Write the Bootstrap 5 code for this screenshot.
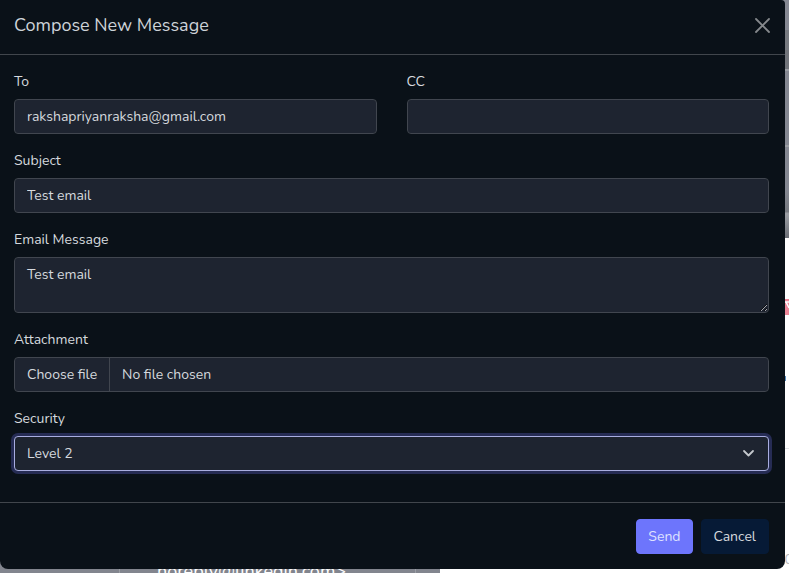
<!DOCTYPE html>
<html lang="en" data-bs-theme="dark">
<head>
<meta charset="utf-8">
<meta name="viewport" content="width=device-width, initial-scale=1">
<title>Compose New Message</title>
<link href="https://cdn.jsdelivr.net/npm/bootstrap@5.3.0/dist/css/bootstrap.min.css" rel="stylesheet">
<style>
  body { font-family: Nunito, "Noto Sans", sans-serif; font-size: 14px; line-height: 21px; color: #d5d9de; background: #fff; }
  .mail-page { min-height: 100vh; padding-right: 4px; }

  /* dimmed mailbox behind the dialog */
  .mail-behind { z-index: 0; }
  .behind-top { right: 0; top: 0; width: 20px; height: 238px; background: linear-gradient(#868993 0 30px, #777a80 30px 50px, #71747a 50px 69px, #9a9da3 69px 71px, #858892 71px 145px, #9a9da3 145px 147px, #858892 147px 190px, #777a80 212px, #9a9da3 213px 215px, #6d7077 238px); }
  .behind-tag { right: 0; top: 299px; width: 8px; height: 16px; background: #ee8799; }
  .behind-tag svg { right: 0; top: 2px; }
  .behind-link { right: 3px; top: 376px; width: 2px; height: 5px; background: #5b8fc0; }
  .behind-rule { right: 0; top: 448px; width: 8px; height: 1px; background: #e3e5e9; }
  .behind-count { right: -4px; top: 549px; color: #b9bbc0; }
  .behind-row { left: 0; top: 560px; width: 440px; height: 22px; background: #82858e; color: #fff; font-size: 18px; line-height: 22px; padding-left: 157px; }
  .behind-row::before, .behind-row::after { content: ""; position: absolute; top: 0; bottom: 0; width: 1px; background: #9a9da4; }
  .behind-row::before { left: 119px; }
  .behind-row::after { left: 415px; }

  .compose { z-index: 1; background: #0a1118; border-radius: 0 4px 8px 8px; }
  .compose-head { padding: 13px 14px 17px; border-bottom: 1px solid #41464c; }
  .compose-head h1 { font-size: 18px; line-height: 24px; font-weight: 400; color: #ced3d8; }
  .compose-body { padding: 16px 16px 15px 14px; }
  .compose-foot { padding: 16px 16px 15px; border-top: 1px solid #41464c; }
  .close-x { padding: 0; border: 0; background: none; color: #85888c; line-height: 0; }
  .form-label { margin-bottom: 7px; }
  .fields { --bs-gutter-x: 30px; --bs-gutter-y: 16px; }
  .form-control, .form-select { font-size: 14px; line-height: 21px; padding: 6px 12px; color: #d5d9de; background-color: #1e2430; border: 1px solid #41464f; border-radius: 4px; }
  .form-control { min-height: 35px; }
  textarea.form-control { height: 56px; min-height: 56px; }
  .form-select { background-image: none; border-color: #a9aee0; box-shadow: 0 0 0 3px #262c54; }
  .form-select:focus { border-color: #a9aee0; box-shadow: 0 0 0 3px #262c54; }
  .chevron { right: 14px; color: #c4c8cd; }
  .file-pick { padding: 0; }
  .file-button { padding: 6px 12px; border-right: 1px solid #41464f; }
  .file-name { padding: 6px 12px; }
  .file-input { inset: 0; }
  .btn { font-size: 14px; line-height: 21px; padding: 6px 12px; border-radius: 4px; color: #d5d9de; }
  .btn-send { padding: 6px 11px; background: #6d75fc; border-color: #6d75fc; color: #dfe2ff; }
  .btn-cancel { background: #061a36; border-color: #061a36; }
</style>
</head>
<body>
<main class="mail-page position-relative overflow-hidden">
  <div class="mail-behind position-absolute top-0 bottom-0 start-0 end-0 overflow-hidden" aria-hidden="true">
    <div class="behind-top position-absolute"></div>
    <div class="behind-tag position-absolute">
      <svg class="position-absolute" width="4" height="10" viewBox="0 0 4 10"><path d="M0 1h4M1 1l3 6" stroke="#fff" stroke-width="1.5" fill="none"/></svg>
    </div>
    <div class="behind-link position-absolute"></div>
    <div class="behind-rule position-absolute"></div>
    <div class="behind-count position-absolute">0</div>
    <div class="behind-row position-absolute">noreply@linkedin.com&gt;</div>
  </div>

  <form class="compose position-relative" role="dialog" aria-labelledby="compose-title">
    <header class="compose-head d-flex align-items-center justify-content-between">
      <h1 class="mb-0" id="compose-title">Compose New Message</h1>
      <button type="button" class="close-x" aria-label="Close">
        <svg width="17" height="17" viewBox="0 0 17 17" fill="none" stroke="currentColor" stroke-width="1.8" stroke-linecap="round"><path d="M2 2l13 13M15 2l-13 13"/></svg>
      </button>
    </header>

    <div class="compose-body">
      <div class="row fields mb-3">
        <div class="col-6 d-flex flex-column">
          <label class="form-label" for="to">To</label>
          <input class="form-control" id="to" type="email" value="rakshapriyanraksha@gmail.com">
        </div>
        <div class="col-6 d-flex flex-column">
          <label class="form-label" for="cc">CC</label>
          <input class="form-control" id="cc" type="email">
        </div>
        <div class="col-12 d-flex flex-column">
          <label class="form-label" for="subject">Subject</label>
          <input class="form-control" id="subject" type="text" value="Test email">
        </div>
        <div class="col-12 d-flex flex-column">
          <label class="form-label" for="message">Email Message</label>
          <textarea class="form-control" id="message">Test email</textarea>
        </div>
        <div class="col-12 d-flex flex-column">
          <label class="form-label" for="attachment">Attachment</label>
          <div class="form-control file-pick position-relative d-flex">
            <span class="file-button">Choose file</span>
            <span class="file-name">No file chosen</span>
            <input class="file-input position-absolute w-100 h-100 opacity-0" id="attachment" type="file">
          </div>
        </div>
        <div class="col-12 d-flex flex-column">
          <label class="form-label" for="security">Security</label>
          <div class="position-relative d-flex align-items-center">
            <select class="form-select" id="security">
              <option>Level 1</option>
              <option selected>Level 2</option>
              <option>Level 3</option>
            </select>
            <svg class="chevron position-absolute pe-none" width="13" height="9" viewBox="0 0 13 9" fill="none" stroke="currentColor" stroke-width="1.8" stroke-linecap="round" stroke-linejoin="round"><path d="M2 2l4.500 4.500L11 2"/></svg>
          </div>
        </div>
      </div>
    </div>

    <footer class="compose-foot d-flex justify-content-end gap-2">
      <button type="submit" class="btn btn-send">Send</button>
      <button type="button" class="btn btn-cancel">Cancel</button>
    </footer>
  </form>
</main>
<script src="https://cdn.jsdelivr.net/npm/bootstrap@5.3.0/dist/js/bootstrap.bundle.min.js"></script>
</body>
</html>
